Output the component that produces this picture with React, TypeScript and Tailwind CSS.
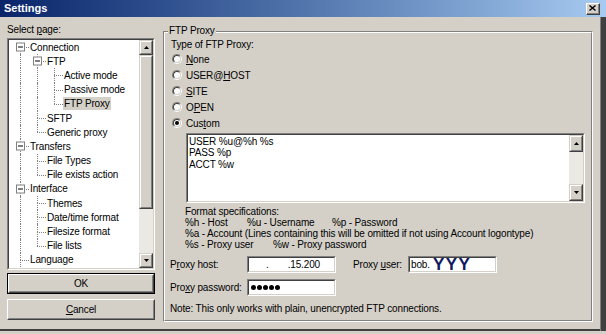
import React from 'react';

type TreeItem = {
  label: string;
  guides: boolean[];
  top: boolean;
  bottom: boolean;
  expander?: boolean;
  selected?: boolean;
};

const TREE: TreeItem[] = [
  { label: 'Connection', guides: [], top: false, bottom: true, expander: true },
  { label: 'FTP', guides: [true], top: true, bottom: true, expander: true },
  { label: 'Active mode', guides: [true, true], top: true, bottom: true },
  { label: 'Passive mode', guides: [true, true], top: true, bottom: true },
  { label: 'FTP Proxy', guides: [true, true], top: true, bottom: false, selected: true },
  { label: 'SFTP', guides: [true], top: true, bottom: true },
  { label: 'Generic proxy', guides: [true], top: true, bottom: false },
  { label: 'Transfers', guides: [], top: true, bottom: true, expander: true },
  { label: 'File Types', guides: [true], top: true, bottom: true },
  { label: 'File exists action', guides: [true], top: true, bottom: false },
  { label: 'Interface', guides: [], top: true, bottom: true, expander: true },
  { label: 'Themes', guides: [true], top: true, bottom: true },
  { label: 'Date/time format', guides: [true], top: true, bottom: true },
  { label: 'Filesize format', guides: [true], top: true, bottom: true },
  { label: 'File lists', guides: [true], top: true, bottom: false },
  { label: 'Language', guides: [], top: true, bottom: true },
];

const RADIOS = [
  { pre: '', key: 'N', post: 'one' },
  { pre: 'USER@', key: 'H', post: 'OST' },
  { pre: '', key: 'S', post: 'ITE' },
  { pre: 'O', key: 'P', post: 'EN' },
  { pre: 'Cus', key: 't', post: 'om', checked: true },
];

function Sunken({ className = '', innerClassName = '', children }: { className?: string; innerClassName?: string; children?: React.ReactNode }) {
  return (
    <div className={`border border-t-[#808080] border-l-[#808080] border-r-white border-b-white ${className}`}>
      <div className={`h-full w-full border border-t-[#404040] border-l-[#404040] border-r-[#d4d0c8] border-b-[#d4d0c8] bg-white ${innerClassName}`}>
        {children}
      </div>
    </div>
  );
}

function Raised({ className = '', children }: { className?: string; children?: React.ReactNode }) {
  return (
    <div className={`border border-t-[#d4d0c8] border-l-[#d4d0c8] border-r-[#404040] border-b-[#404040] bg-[#d4d0c8] ${className}`}>
      <div className="flex h-full w-full items-center justify-center border border-t-white border-l-white border-r-[#808080] border-b-[#808080]">
        {children}
      </div>
    </div>
  );
}

function Arrow({ down = false }: { down?: boolean }) {
  return (
    <svg width="5" height="3" viewBox="0 0 5 3" className="block">
      <polygon points={down ? '0,0 5,0 2.5,3' : '2.5,0 5,3 0,3'} fill="#000" />
    </svg>
  );
}

function ScrollBar({ btn, thumb }: { btn: number; thumb?: number }) {
  return (
    <div className="flex h-full w-[14px] shrink-0 flex-col">
      <Raised className="shrink-0">
        <div style={{ height: btn - 2 }} className="flex items-center">
          <Arrow />
        </div>
      </Raised>
      {thumb ? <Raised className="shrink-0"><div style={{ height: thumb - 2 }} /></Raised> : null}
      <div className="flex-1 bg-[#ebe9e4]" />
      <Raised className="shrink-0">
        <div style={{ height: btn - 2 }} className="flex items-center">
          <Arrow down />
        </div>
      </Raised>
    </div>
  );
}

function TreeRow({ item }: { item: TreeItem }) {
  return (
    <div className="flex h-[14.2px] items-stretch">
      {item.guides.map((g, i) => (
        <div key={i} className="relative w-[17px] shrink-0">
          {g && <div className="absolute top-0 bottom-0 left-[8px] border-l border-dotted border-[#808080]" />}
        </div>
      ))}
      <div className="relative w-[17px] shrink-0">
        {item.top && <div className="absolute top-0 left-[8px] h-1/2 border-l border-dotted border-[#808080]" />}
        {item.bottom && <div className="absolute top-1/2 bottom-0 left-[8px] border-l border-dotted border-[#808080]" />}
        <div className="absolute top-1/2 right-0 left-[8px] border-t border-dotted border-[#808080]" />
        {item.expander && (
          <div className="absolute top-1/2 left-[4px] flex h-[9px] w-[9px] -translate-y-1/2 items-center justify-center border border-[#808080] bg-white">
            <div className="h-px w-[5px] bg-black" />
          </div>
        )}
      </div>
      <div className="flex items-center">
        <span className={`px-[1px] leading-[13px] whitespace-nowrap ${item.selected ? 'bg-[#d4d0c8]' : ''}`}>{item.label}</span>
      </div>
    </div>
  );
}

function Radio({ checked }: { checked?: boolean }) {
  return (
    <div className="h-[10px] w-[10px] rounded-full border border-t-[#808080] border-l-[#808080] border-r-white border-b-white">
      <div className="flex h-full w-full items-center justify-center rounded-full border border-t-[#404040] border-l-[#404040] border-r-[#d4d0c8] border-b-[#d4d0c8] bg-white">
        {checked && <div className="h-[4px] w-[4px] rounded-full bg-black" />}
      </div>
    </div>
  );
}

function PushButton({ isDefault, children }: { isDefault?: boolean; children: React.ReactNode }) {
  return (
    <div className={`h-[21px] w-full ${isDefault ? 'border border-black' : ''}`}>
      <div className="h-full w-full border border-t-white border-l-white border-r-[#404040] border-b-[#404040]">
        <div className="flex h-full w-full items-center justify-center border border-t-[#d4d0c8] border-l-[#d4d0c8] border-r-[#808080] border-b-[#808080]">
          {children}
        </div>
      </div>
    </div>
  );
}

export default function App() {
  return (
    <div className="flex h-[334px] w-[606px] flex-col overflow-hidden bg-[#d4d0c8] font-['Liberation_Sans',Arial,sans-serif] text-[10px] tracking-[-0.15px] text-black">
      {/* caption */}
      <div className="flex h-[17px] shrink-0 items-center bg-linear-to-r from-[#0a246a] to-[#a6caf0]">
        <span className="flex-1 pl-[4px] text-[11px] font-bold tracking-normal text-white">Settings</span>
        <div className="mr-[6px] h-[12px] w-[14px] border border-t-white border-l-white border-r-[#404040] border-b-[#404040] bg-[#d4d0c8]">
          <div className="flex h-full w-full items-center justify-center border-r border-b border-[#808080]">
            <svg width="7" height="6" viewBox="0 0 7 6">
              <path d="M0.5 0.5 L6.5 5.5 M6.5 0.5 L0.5 5.5" stroke="#000" strokeWidth="1.4" />
            </svg>
          </div>
        </div>
      </div>

      <div className="flex h-[314px] shrink-0">
        <div className="flex w-[600px] flex-col">
          <div className="flex h-[312px] items-start">
            {/* left column */}
            <div className="ml-[7px] w-[148px] shrink-0 pt-[7px]">
              <div className="h-[12px] leading-[12px]">
                Select <span className="underline">p</span>age:
              </div>
              <Sunken className="mt-[2px] h-[232px]" innerClassName="flex">
                <div className="flex-1 overflow-hidden pl-[3px]">
                  {TREE.map((item) => (
                    <TreeRow key={item.label} item={item} />
                  ))}
                </div>
                <ScrollBar btn={13} thumb={152} />
              </Sunken>
              <div className="mt-[3px]">
                <PushButton isDefault>OK</PushButton>
              </div>
              <div className="mt-[5px]">
                <PushButton>
                  <span className="underline">C</span>ancel
                </PushButton>
              </div>
            </div>

            {/* FTP Proxy group */}
            <div className="relative mt-[14px] ml-[8px] h-[291px] w-[430px] shrink-0 border border-t-[#808080] border-l-[#808080] border-r-white border-b-white">
              <div className="flex h-full w-full flex-col border border-t-white border-l-white border-r-[#808080] border-b-[#808080] pt-[6px] pl-[5px]">
                <div className="ml-[1px] h-[12px] leading-[12px]">Type of FTP Proxy:</div>
                <div className="flex flex-col">
                  {RADIOS.map((r) => (
                    <div key={r.pre + r.key} className="flex h-[16px] items-center">
                      <div className="ml-[2px]">
                        <Radio checked={r.checked} />
                      </div>
                      <span className="ml-[4px]">
                        {r.pre}
                        <span className="underline">{r.key}</span>
                        {r.post}
                      </span>
                    </div>
                  ))}
                </div>
                <Sunken className="mt-[2px] ml-[16px] h-[70px] w-[399px]" innerClassName="flex">
                  <div className="flex-1 pt-[1px] pl-[1px] leading-[11.3px]">
                    <div>USER %u@%h %s</div>
                    <div>PASS %p</div>
                    <div>ACCT %w</div>
                  </div>
                  <ScrollBar btn={15} />
                </Sunken>
                <div className="mt-[3px] ml-[15px] leading-[11px] whitespace-nowrap">
                  <div>Format specifications:</div>
                  <div>
                    <span className="inline-block w-[62px]">%h - Host</span>
                    <span className="inline-block w-[85px]">%u - Username</span>
                    <span>%p - Password</span>
                  </div>
                  <div>%a - Account (Lines containing this will be omitted if not using Account logontype)</div>
                  <div>
                    <span className="inline-block w-[88px]">%s - Proxy user</span>
                    <span>%w - Proxy password</span>
                  </div>
                </div>
                <div className="mt-[6px] flex h-[17px] items-center">
                  <span className="w-[77px]">
                    P<span className="underline">r</span>oxy host:
                  </span>
                  <Sunken className="h-[17px] w-[89px]" innerClassName="flex items-center whitespace-nowrap">
                    <span className="pl-[17px]">.</span>
                    <span className="ml-[19px]">.15.200</span>
                  </Sunken>
                  <span className="ml-[17px] w-[55px]">
                    Proxy <span className="underline">u</span>ser:
                  </span>
                  <Sunken className="h-[17px] w-[89px]" innerClassName="flex items-center overflow-visible whitespace-nowrap">
                    <span className="pl-[1px]">bob.</span>
                    <span className="ml-[3px] text-[17px] leading-none font-bold tracking-[1.5px] text-[#101860]">YYY</span>
                  </Sunken>
                </div>
                <div className="mt-[6px] flex h-[17px] items-center">
                  <span className="w-[77px]">
                    Pro<span className="underline">x</span>y password:
                  </span>
                  <Sunken className="h-[17px] w-[89px]" innerClassName="flex items-center gap-[1px] pl-[2px]">
                    {[0, 1, 2, 3, 4].map((i) => (
                      <div key={i} className="h-[5px] w-[5px] rounded-full bg-black" />
                    ))}
                  </Sunken>
                </div>
                <div className="mt-[7px] leading-[12px]">Note: This only works with plain, unencrypted FTP connections.</div>
              </div>
              <span className="absolute top-[-7px] left-[4px] bg-[#d4d0c8] px-[1px] leading-[12px]">FTP Proxy</span>
            </div>
          </div>
          <div className="h-[2px] bg-[#404040]" />
        </div>
        <div className="w-[6px] border-l border-[#808080] bg-[#404040]" />
      </div>
      <div className="flex-1" />
    </div>
  );
}
